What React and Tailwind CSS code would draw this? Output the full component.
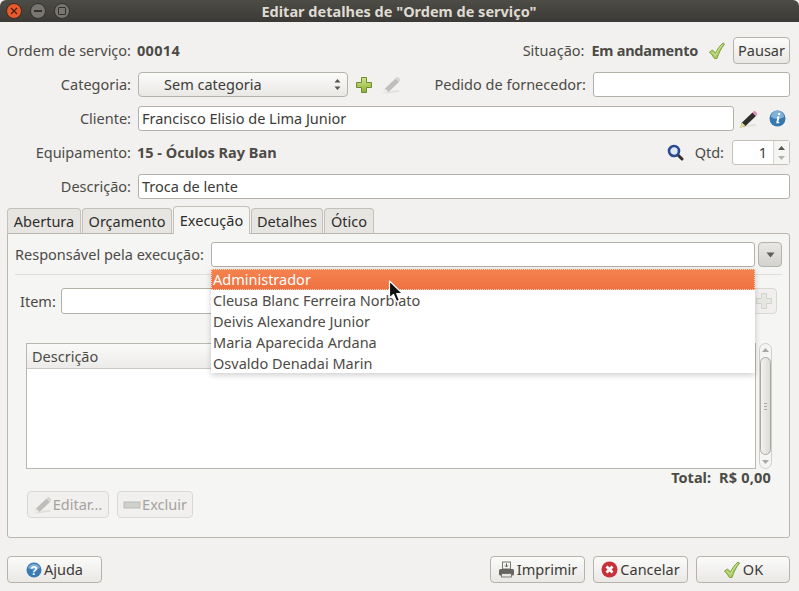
import React from "react";

const Check = () => (
  <svg width="18" height="18" viewBox="0 0 18 18" className="shrink-0">
    <path d="M1.500 10 L4.500 8 L7.500 11 C9.500 7 12 3.500 15 1 L16.500 2 C13 6.500 10.500 11.500 9 16.500 L6.500 16.500 C5 14 3.500 12 1.500 10 Z" fill="#a9cc63" stroke="#7fa23c" strokeWidth="1" strokeLinejoin="round" />
    <path d="M3.500 10 L7.500 13.500 C9.500 9 11.500 6 14.500 2.500" fill="none" stroke="#cfe59a" strokeWidth="1" />
  </svg>
);

const Plus = ({ muted }) => (
  <svg width="18" height="18" viewBox="0 0 18 18" className="shrink-0">
    <defs>
      <linearGradient id="plusGreen" x1="0" y1="0" x2="0" y2="1">
        <stop offset="0" stopColor="#d3e388" />
        <stop offset="1" stopColor="#8bb03a" />
      </linearGradient>
    </defs>
    <path
      d="M6.500 1.500 H11.500 V6.500 H16.500 V11.500 H11.500 V16.500 H6.500 V11.500 H1.500 V6.500 H6.500 Z"
      fill={muted ? "#e6e6e3" : "url(#plusGreen)"}
      stroke={muted ? "#d2d2ce" : "#6c8f2e"}
      strokeWidth="1"
      strokeLinejoin="round"
    />
  </svg>
);

const Pencil = ({ dark }) => (
  <svg width="18" height="18" viewBox="0 0 18 18" className="shrink-0">
    <path d="M1.500 16.500 L15 14 L17 15.500 L3 17.500 Z" fill="#000" opacity="0.08" />
    <path d="M12.500 2.500 L16 6 L5.500 16 L0.500 17.500 L2 12.500 Z" fill={dark ? "#2f2e2b" : "#bebebb"} />
    <path d="M2 12.500 L5.500 16 L0.500 17.500 Z" fill={dark ? "#ecdf90" : "#eeeeeb"} />
    <path d="M12.500 2.500 L14 1 C15 0.500 17.500 3 17.300 4.500 L16 6 Z" fill={dark ? "#dc8fc0" : "#d5d5d2"} />
  </svg>
);

const Info = () => (
  <svg width="17" height="17" viewBox="0 0 17 17" className="shrink-0">
    <circle cx="8.500" cy="8.500" r="8" fill="#3677ae" />
    <path d="M2 7 A6.500 6.500 0 0 1 15 7 C11 9.500 6 9.500 2 7 Z" fill="#7fb1d8" />
    <path d="M9.300 3 h2 l-.4 2 h-2 Z M8.200 6.500 h2.400 L9.400 12 h1 l-.3 1.300 H7.200 L8.300 7.800 h-.4 Z" fill="#fff" />
  </svg>
);

const Search = () => (
  <svg width="17" height="17" viewBox="0 0 17 17" className="shrink-0">
    <path d="M10.500 10.500 L15 15" stroke="#33312e" strokeWidth="3" strokeLinecap="round" />
    <circle cx="7" cy="7" r="5" fill="#dfe9f3" stroke="#2c4a94" strokeWidth="2.600" />
  </svg>
);

const Help = () => (
  <svg width="16" height="16" viewBox="0 0 16 16" className="shrink-0">
    <circle cx="8" cy="8" r="7.500" fill="#3a7ab5" />
    <path d="M2 6 A6.500 6.500 0 0 1 14 6 C10 8 6 8 2 6 Z" fill="#7fb0d8" />
    <text x="8" y="12.500" textAnchor="middle" fontSize="12" fontWeight="700" fill="#fff" fontFamily="'Liberation Sans', sans-serif">?</text>
  </svg>
);

const Printer = () => (
  <svg width="17" height="17" viewBox="0 0 17 17" className="shrink-0">
    <rect x="4.500" y="1" width="8" height="7" fill="#f4f4f2" stroke="#77766f" />
    <path d="M8.500 2.500 v3 M7 4.500 l1.500 1.500 L10 4.500" stroke="#55544f" fill="none" />
    <rect x="1" y="8" width="15" height="6.500" rx="1.500" fill="#66655f" />
    <rect x="3.500" y="12.500" width="10" height="3.500" fill="#e8e8e5" stroke="#66655f" strokeWidth="0.800" />
  </svg>
);

const Cancel = () => (
  <svg width="17" height="17" viewBox="0 0 17 17" className="shrink-0">
    <circle cx="8.500" cy="8.500" r="8" fill="#c8303a" />
    <path d="M5.500 5.500 L11.500 11.500 M11.500 5.500 L5.500 11.500" stroke="#fff" strokeWidth="2.800" />
  </svg>
);

const Minus = () => (
  <svg width="18" height="18" viewBox="0 0 18 18" className="shrink-0">
    <rect x="1" y="6" width="16" height="6" fill="#cfcfcb" stroke="#bcbcb8" />
  </svg>
);

const Arrows = () => (
  <svg width="7" height="13" viewBox="0 0 7 13" className="shrink-0">
    <path d="M3.500 1 L6.500 4.500 H0.500 Z M3.500 12 L0.500 8.500 H6.500 Z" fill="#55544f" />
  </svg>
);

const Button = ({ className, children }) => (
  <div className={`flex items-center justify-center h-[27px] rounded-[4px] border border-[#b5b3ac] bg-gradient-to-b from-[#fbfbfa] to-[#e9e8e5] text-[#3c3b37] ${className}`}>
    {children}
  </div>
);

const Input = ({ className, children }) => (
  <div className={`flex items-center h-[25px] px-[3px] rounded-[3px] border border-[#b3b1a9] bg-white text-[#3c3b37] ${className}`}>
    {children}
  </div>
);

const Label = ({ children }) => (
  <span className="w-[124px] shrink-0 whitespace-nowrap flex justify-end text-[#4c4b46] mr-[7px]">{children}</span>
);

const Tab = ({ active, children, className }) => (
  <div
    className={`flex items-center justify-center rounded-t-[4px] border border-b-0 border-[#c3c1ba] text-[#2f2e2a] ${
      active ? "h-[28px] bg-[#f5f5f4] -mb-px z-10 relative" : "h-[25px] bg-[#e6e5e2]"
    } ${className}`}
  >
    {children}
  </div>
);

const responsaveis = [
  "Administrador",
  "Cleusa Blanc Ferreira Norbiato",
  "Deivis Alexandre Junior",
  "Maria Aparecida Ardana",
  "Osvaldo Denadai Marin",
];

export default function App() {
  return (
    <div className="relative w-[799px] h-[591px] overflow-hidden bg-[#f2f1f0] text-[14.5px] leading-none font-['Noto_Sans',sans-serif] text-[#4c4b46]">
      {/* title bar */}
      <div className="relative flex items-center justify-center h-[22px] rounded-t-[6px] bg-gradient-to-b from-[#4e4c46] to-[#3b3a36]">
        <div className="absolute left-[6px] top-[3px] flex gap-[8px]">
          <div className="flex items-center justify-center w-[16px] h-[16px] rounded-full bg-[#e9592b] border border-[#3a2a20]">
            <svg width="8" height="8" viewBox="0 0 8 8"><path d="M1 1 L7 7 M7 1 L1 7" stroke="#4a2010" strokeWidth="1.300" /></svg>
          </div>
          <div className="flex items-center justify-center w-[16px] h-[16px] rounded-full bg-[#77756d] border border-[#33322e]">
            <div className="w-[8px] h-[2px] bg-[#33322e]" />
          </div>
          <div className="flex items-center justify-center w-[16px] h-[16px] rounded-full bg-[#77756d] border border-[#33322e]">
            <div className="w-[8px] h-[8px] border border-[#33322e] rounded-[1px]" />
          </div>
        </div>
        <span className="text-[#dfdbd2] font-bold text-[14.5px] ml-[-1px]">Editar detalhes de "Ordem de serviço"</span>
      </div>

      <div className="pl-[7px] pr-[9px] pt-[15px]">
        {/* order number + status */}
        <div className="flex items-center h-[27px]">
          <Label>Ordem de serviço:</Label>
          <span className="font-bold tracking-[0.3px] ml-[-1px]">00014</span>
          <span className="ml-auto">Situação:</span>
          <span className="font-bold ml-[7px] tracking-[-0.25px]">Em andamento</span>
          <span className="ml-[10px] mr-[7px]"><Check /></span>
          <Button className="w-[57px]">Pausar</Button>
        </div>

        {/* category */}
        <div className="flex items-center h-[25px] mt-[8px]">
          <Label>Categoria:</Label>
          <Button className="w-[210px] !h-[25px] !justify-between pl-[25px] pr-[6px]">
            <span>Sem categoria</span>
            <Arrows />
          </Button>
          <span className="ml-[7px]"><Plus /></span>
          <span className="ml-[10px]"><Pencil /></span>
          <span className="ml-auto">Pedido de fornecedor:</span>
          <Input className="w-[197px] ml-[7px]" />
        </div>

        {/* client */}
        <div className="flex items-center h-[25px] mt-[9px]">
          <Label>Cliente:</Label>
          <Input className="w-[596px]">Francisco Elisio de Lima Junior</Input>
          <span className="ml-[6px]"><Pencil dark /></span>
          <span className="ml-[11px]"><Info /></span>
        </div>

        {/* equipment */}
        <div className="flex items-center h-[25px] mt-[9px]">
          <Label>Equipamento:</Label>
          <span className="font-bold ml-[-1px]">15 - Óculos Ray Ban</span>
          <span className="ml-auto"><Search /></span>
          <span className="ml-[11px] mr-[8px]">Qtd:</span>
          <div className="flex w-[58px] h-[25px] rounded-[3px] border border-[#c3c1ba] bg-white">
            <span className="flex-1 flex items-center justify-end pr-[6px] text-[#3c3b37]">1</span>
            <div className="flex flex-col items-center justify-center gap-[6px] w-[16px] border-l border-[#d6d5d0] bg-[#f5f5f4]">
              <svg width="7" height="4" viewBox="0 0 7 4"><path d="M3.500 0 L7 4 H0 Z" fill="#55544f" /></svg>
              <svg width="7" height="4" viewBox="0 0 7 4"><path d="M3.500 4 L0 0 H7 Z" fill="#b5b4af" /></svg>
            </div>
          </div>
        </div>

        {/* description */}
        <div className="flex items-center h-[25px] mt-[9px]">
          <Label>Descrição:</Label>
          <Input className="w-[652px]">Troca de lente</Input>
        </div>

        {/* tabs */}
        <div className="flex items-end gap-px h-[28px] mt-[6px]">
          <Tab className="w-[74px]">Abertura</Tab>
          <Tab className="w-[90px]">Orçamento</Tab>
          <Tab active className="w-[77px]">Execução</Tab>
          <Tab className="w-[72px]">Detalhes</Tab>
          <Tab className="w-[50px]">Ótico</Tab>
        </div>

        {/* tab panel */}
        <div className="h-[305px] rounded-b-[3px] rounded-tr-[3px] border border-[#b9b7b0] bg-[#f5f5f4] pt-[8px]">
          <div className="flex items-center h-[25px] pl-[7px]">
            <span className="w-[196px] shrink-0">Responsável pela execução:</span>
            <Input className="w-[544px]" />
            <Button className="w-[24px] !h-[25px] ml-[3px] !from-[#e9e8e5] !to-[#d3d2ce]">
              <svg width="9" height="6" viewBox="0 0 9 6"><path d="M0.500 0.500 H8.500 L4.500 5.500 Z" fill="#5d5c57" /></svg>
            </Button>
          </div>
          <div className="h-px bg-[#dfdedb] mt-[7px] mx-[7px]" />

          <div className="flex items-center h-[26px] mt-[13px] pl-[12px]">
            <span className="w-[41px] shrink-0">Item:</span>
            <Input className="w-[690px] !h-[26px]" />
            <div className="flex items-center justify-center w-[27px] h-[26px] ml-[-1px] rounded-[4px] border border-[#d9d8d4] bg-[#f0efed]">
              <Plus muted />
            </div>
          </div>

          {/* items table */}
          <div className="flex mt-[29px] pl-[18px]">
            <div className="w-[730px] h-[126px] border border-[#b9b7b0] bg-white">
              <div className="flex items-center h-[25px] pl-[5px] border-b border-[#c9c8c3] bg-gradient-to-b from-[#fafaf9] to-[#ecebe9]">
                Descrição
              </div>
            </div>
            <div className="relative flex flex-col items-center justify-between w-[13px] h-[126px] ml-[3px] py-[4px] rounded-full border border-[#cfcec9] bg-[#f5f5f4]">
              <svg width="7" height="4" viewBox="0 0 7 4"><path d="M3.500 0 L7 4 H0 Z" fill="#a9a8a3" /></svg>
              <div className="absolute left-0 right-0 top-[13px] bottom-[13px] flex flex-col items-center justify-center gap-[2px] rounded-full border border-[#a9a8a3] bg-gradient-to-r from-[#f2f2f0] to-[#dcdbd8]">
                <div className="w-[3px] h-px bg-[#aaa9a4]" />
                <div className="w-[3px] h-px bg-[#aaa9a4]" />
                <div className="w-[3px] h-px bg-[#aaa9a4]" />
              </div>
              <svg width="7" height="4" viewBox="0 0 7 4"><path d="M3.500 4 L0 0 H7 Z" fill="#a9a8a3" /></svg>
            </div>
          </div>

          <div className="flex justify-end h-[19px] items-center mt-[-1px] pr-[18px] font-bold">
            <span>Total:</span>
            <span className="ml-[8px] tracking-[0.2px]">R$ 0,00</span>
          </div>

          <div className="flex gap-[8px] mt-[4px] pl-[19px]">
            <div className="flex items-center justify-center gap-px w-[82px] h-[27px] rounded-[4px] border border-[#d9d8d4] bg-[#f1f0ee] text-[#a5a39d]">
              <Pencil />Editar...
            </div>
            <div className="flex items-center justify-center gap-px w-[76px] h-[27px] rounded-[4px] border border-[#d9d8d4] bg-[#f1f0ee] text-[#a5a39d]">
              <Minus />Excluir
            </div>
          </div>
        </div>

        {/* dialog buttons */}
        <div className="flex mt-[18px]">
          <Button className="w-[95px] gap-[2px]"><Help />Ajuda</Button>
          <Button className="w-[95px] gap-[2px] ml-auto"><Printer />Imprimir</Button>
          <Button className="w-[95px] gap-[2px] ml-[8px]"><Cancel />Cancelar</Button>
          <Button className="w-[94px] gap-[2px] ml-[8px]"><Check />OK</Button>
        </div>
      </div>

      {/* open combo list */}
      <div className="absolute left-[211px] top-[269px] w-[544px] h-[104px] bg-white shadow-[0_2px_6px_rgba(0,0,0,0.2)]">
        {responsaveis.map((nome, idx) => (
          <div
            key={nome}
            className={`flex items-center h-[21px] pl-[2px] ${
              idx === 0
                ? "bg-gradient-to-b from-[#f4834f] to-[#ee7140] text-white outline-1 -outline-offset-1 outline-dotted outline-[#fbd5c0]"
                : "text-[#4c4b46]"
            }`}
          >
            {nome}
          </div>
        ))}
      </div>

      {/* mouse pointer */}
      <svg width="16" height="23" viewBox="0 0 16 23" className="absolute left-[388px] top-[280px]">
        <path d="M1.500 1 L1.500 18 L5.500 14.500 L8.500 21.500 L11.500 20.200 L8.700 13.500 L14.500 13.500 Z" fill="#111" stroke="#fff" strokeWidth="1.200" strokeLinejoin="round" />
      </svg>
    </div>
  );
}
